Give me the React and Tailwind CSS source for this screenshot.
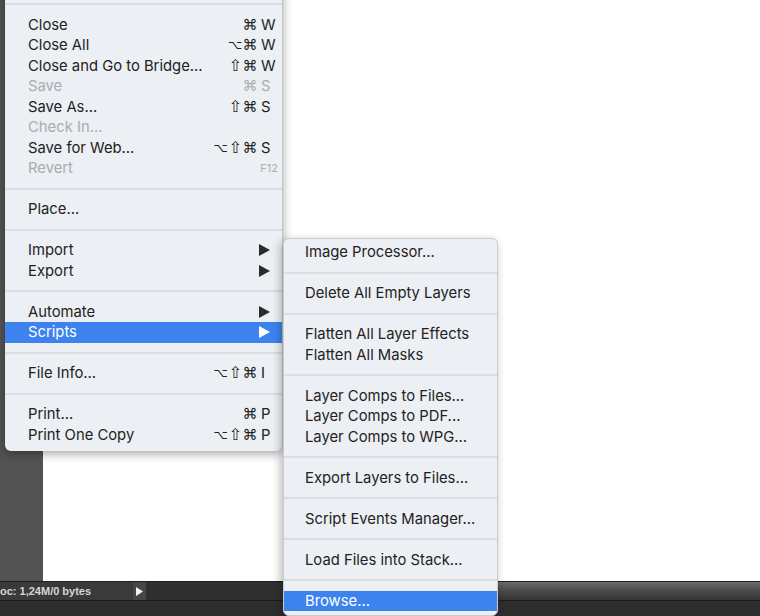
import React from "react";

const font = { fontFamily: "Inter, 'DejaVu Sans', sans-serif" };

const fileItems = [
  { sep: true },
  { label: "Close", mods: ["⌘"], key: "W" },
  { label: "Close All", mods: ["⌥", "⌘"], key: "W" },
  { label: "Close and Go to Bridge...", mods: ["⇧", "⌘"], key: "W" },
  { label: "Save", mods: ["⌘"], key: "S", off: true },
  { label: "Save As...", mods: ["⇧", "⌘"], key: "S" },
  { label: "Check In...", off: true },
  { label: "Save for Web...", mods: ["⌥", "⇧", "⌘"], key: "S" },
  { label: "Revert", fkey: "F12", off: true },
  { sep: true },
  { label: "Place..." },
  { sep: true },
  { label: "Import", sub: true },
  { label: "Export", sub: true },
  { sep: true },
  { label: "Automate", sub: true },
  { label: "Scripts", sub: true, active: true },
  { sep: true },
  { label: "File Info...", mods: ["⌥", "⇧", "⌘"], key: "I" },
  { sep: true },
  { label: "Print...", mods: ["⌘"], key: "P" },
  { label: "Print One Copy", mods: ["⌥", "⇧", "⌘"], key: "P" },
];

const scriptItems = [
  { label: "Image Processor..." },
  { sep: true },
  { label: "Delete All Empty Layers" },
  { sep: true },
  { label: "Flatten All Layer Effects" },
  { label: "Flatten All Masks" },
  { sep: true },
  { label: "Layer Comps to Files..." },
  { label: "Layer Comps to PDF..." },
  { label: "Layer Comps to WPG..." },
  { sep: true },
  { label: "Export Layers to Files..." },
  { sep: true },
  { label: "Script Events Manager..." },
  { sep: true },
  { label: "Load Files into Stack..." },
  { sep: true },
  { label: "Browse...", active: true },
];

// glyph sizes so each modifier fits its 14.5px slot
const modSize = {
  "⌥": "text-[12.5px]",
  "⇧": "text-[16px]",
  "⌘": "text-[15px]",
};

const Separator = () => (
  <div className="flex h-[20.5px] items-center">
    <div className="h-[2px] w-full bg-[#d9dce0]" />
  </div>
);

const Arrow = ({ white }) => (
  <svg width="11" height="12" viewBox="0 0 11 12">
    <path d="M0 0 L11 6 L0 12 Z" fill={white ? "#ffffff" : "#2b2b2b"} />
  </svg>
);

const MenuRow = ({ item, pad }) => {
  const color = item.active ? "text-white bg-[#3d83f0]" : item.off ? "text-[#a9acb0]" : "text-[#222222]";
  return (
    <div className={`flex h-[20.5px] items-center text-[14.8px] ${pad} ${color}`}>
      <span className="flex-1 whitespace-nowrap">{item.label}</span>
      {item.mods && (
        <span className="flex items-center justify-end pr-[1px]" style={{ fontFamily: "'DejaVu Sans', sans-serif" }}>
          {item.mods.map((m, i) => (
            <span key={i} className={`inline-block w-[14.5px] overflow-hidden text-center leading-[20px] ${modSize[m]}`}>{m}</span>
          ))}
        </span>
      )}
      {item.key && <span className="w-[24px] pl-[3px]">{item.key}</span>}
      {item.sub && (
        <span className="flex w-[24px] items-center pl-[1px]">
          <Arrow white={item.active} />
        </span>
      )}
      {item.fkey && <span className="pr-[4px] text-[11px] text-[#a9acb0]">{item.fkey}</span>}
    </div>
  );
};

const StatusBar = () => (
  <div className="flex flex-col">
    <div className="flex h-[19px] border-t border-[#1f1f1f]">
      <div className="flex w-[133px] items-center bg-[#3a3a3a] text-[11px] font-bold text-[#d6d6d6]" style={{ fontFamily: "'Liberation Sans', sans-serif" }}>
        oc: 1,24M/0 bytes
      </div>
      <div className="flex w-[13px] items-center justify-center bg-[#474747]">
        <svg width="7" height="9" viewBox="0 0 7 9">
          <path d="M0 0 L7 4.5 L0 9 Z" fill="#f2f2f2" />
        </svg>
      </div>
      <div className="w-[140px] bg-[#303030]" />
      <div className="flex-1 bg-gradient-to-b from-[#6b6b6b] via-[#4a4a4a] to-[#353535]" />
    </div>
    <div className="h-[16px] border-t border-[#1c1c1c] bg-[#2e2e2e]" />
  </div>
);

export default function App() {
  return (
    <div className="relative flex h-[616px] w-[760px] flex-col overflow-hidden" style={font}>
      <div className="flex h-[581px]">
        <div className="w-[43px] bg-[#535353]" />
        <div className="flex-1 bg-white" />
      </div>
      <StatusBar />

      {/* File menu */}
      <div className="absolute left-[5px] top-[-26px] w-[278px] rounded-[6px] border-r border-[#c6c8cb] bg-[#eceff3] pb-[6px] shadow-[0_3px_10px_rgba(0,0,0,0.35)]">
        <div className="h-[20px]" />
        {fileItems.map((item, i) =>
          item.sep ? <Separator key={i} /> : <MenuRow key={i} item={item} pad="pl-[23px]" />
        )}
      </div>

      {/* Scripts submenu */}
      <div className="absolute left-[283px] top-[238px] w-[215px] rounded-[6px] border border-[#c9cbce] bg-[#eceff3] pt-[3px] pb-[4px] shadow-[-2px_3px_10px_rgba(0,0,0,0.3)]">
        {scriptItems.map((item, i) =>
          item.sep ? <Separator key={i} /> : <MenuRow key={i} item={item} pad="pl-[21px]" />
        )}
      </div>
    </div>
  );
}
